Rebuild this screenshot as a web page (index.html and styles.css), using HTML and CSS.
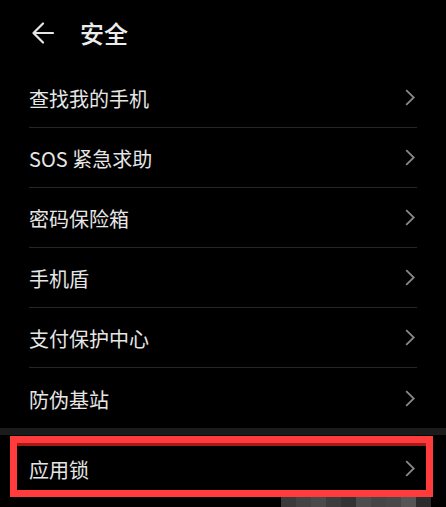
FILE: index.html
```html
<!DOCTYPE html>
<html lang="zh-CN">
<head>
<meta charset="utf-8">
<title>安全</title>
<link rel="stylesheet" href="styles.css">
</head>
<body>
<div class="screen">
  <header class="header">
    <svg class="back" width="22" height="22" viewBox="0 0 22 22"><path d="M11 1.5 L1.5 11 L11 20.5 M1.5 11 H21" fill="none" stroke="#e6e6e6" stroke-width="2.2" stroke-linecap="round" stroke-linejoin="round"/></svg>
    <h1 class="title">安全</h1>
  </header>
  <ul class="list">
    <li class="row"><span class="label">查找我的手机</span><svg class="chev" width="10" height="17" viewBox="0 0 10 17"><polyline points="1.2,1.2 8.8,8.5 1.2,15.8" fill="none" stroke="#8a8a8a" stroke-width="1.8"/></svg></li>
    <li class="row"><span class="label">SOS 紧急求助</span><svg class="chev" width="10" height="17" viewBox="0 0 10 17"><polyline points="1.2,1.2 8.8,8.5 1.2,15.8" fill="none" stroke="#8a8a8a" stroke-width="1.8"/></svg></li>
    <li class="row"><span class="label">密码保险箱</span><svg class="chev" width="10" height="17" viewBox="0 0 10 17"><polyline points="1.2,1.2 8.8,8.5 1.2,15.8" fill="none" stroke="#8a8a8a" stroke-width="1.8"/></svg></li>
    <li class="row"><span class="label">手机盾</span><svg class="chev" width="10" height="17" viewBox="0 0 10 17"><polyline points="1.2,1.2 8.8,8.5 1.2,15.8" fill="none" stroke="#8a8a8a" stroke-width="1.8"/></svg></li>
    <li class="row"><span class="label">支付保护中心</span><svg class="chev" width="10" height="17" viewBox="0 0 10 17"><polyline points="1.2,1.2 8.8,8.5 1.2,15.8" fill="none" stroke="#8a8a8a" stroke-width="1.8"/></svg></li>
    <li class="row last"><span class="label">防伪基站</span><svg class="chev" width="10" height="17" viewBox="0 0 10 17"><polyline points="1.2,1.2 8.8,8.5 1.2,15.8" fill="none" stroke="#8a8a8a" stroke-width="1.8"/></svg></li>
  </ul>
  <div class="band"></div>
  <div class="highlight">
    <div class="hl-row"><span class="label">应用锁</span><svg class="chev" width="10" height="17" viewBox="0 0 10 17"><polyline points="1.2,1.2 8.8,8.5 1.2,15.8" fill="none" stroke="#8a8a8a" stroke-width="1.8"/></svg></div>
  </div>
  <div class="mosaic">
    <span class="m1"></span><span class="m2"></span><span class="m3"></span><span class="m4"></span><span class="m5"></span><span class="m6"></span><span class="m7"></span><span class="m8"></span><span class="m9"></span><span class="m10"></span>
  </div>
</div>
</body>
</html>
```

FILE: styles.css
```css
html, body {
  margin: 0;
  padding: 0;
  background: #000;
}
body {
  font-family: "Noto Sans CJK SC", "Noto Sans", sans-serif;
  color: #e6e6e6;
  width: 446px;
  height: 507px;
  overflow: hidden;
}
.screen {
  display: flex;
  flex-direction: column;
}
.header {
  height: 68px;
  display: flex;
  align-items: center;
  padding-left: 32px;
  padding-bottom: 2px;
  box-sizing: border-box;
  gap: 26px;
}
.back {
  display: block;
}
.title {
  margin: 0;
  font-size: 24px;
  font-weight: 500;
  line-height: 1;
  color: #ececec;
}
.list {
  list-style: none;
  margin: 0;
  padding: 0 29px;
}
.row {
  height: 60px;
  display: flex;
  align-items: center;
  justify-content: space-between;
  border-bottom: 1px solid #262626;
  box-sizing: border-box;
  padding-right: 2px;
}
.row.last {
  border-bottom: none;
}
.label {
  font-size: 20px;
  line-height: 1;
  padding-top: 3px;
}
.chev {
  display: block;
}
.band {
  height: 7px;
  background: #1b1b1b;
}
.highlight {
  margin: 1px 13px 0 10px;
  border: 7px solid #ff3b3b;
}
.hl-row {
  height: 47px;
  box-sizing: border-box;
  border-top: 3px solid #a61a1a;
  display: flex;
  align-items: center;
  justify-content: space-between;
  padding: 0 11px 0 12px;
}
.mosaic {
  display: flex;
  margin-left: 281px;
  height: 10px;
}
.mosaic span {
  width: 15px;
  height: 10px;
}
.m1 { background: #3a3a3a; }
.m2 { background: #434343; }
.m3 { background: #4a4a4a; }
.m4 { background: #3d3d3d; }
.m5 { background: #333333; }
.m6 { background: #4d4d4d; }
.m7 { background: #454545; }
.m8 { background: #484848; }
.m9 { background: #555555; }
.m10 { background: #2c2c2c; }
```
